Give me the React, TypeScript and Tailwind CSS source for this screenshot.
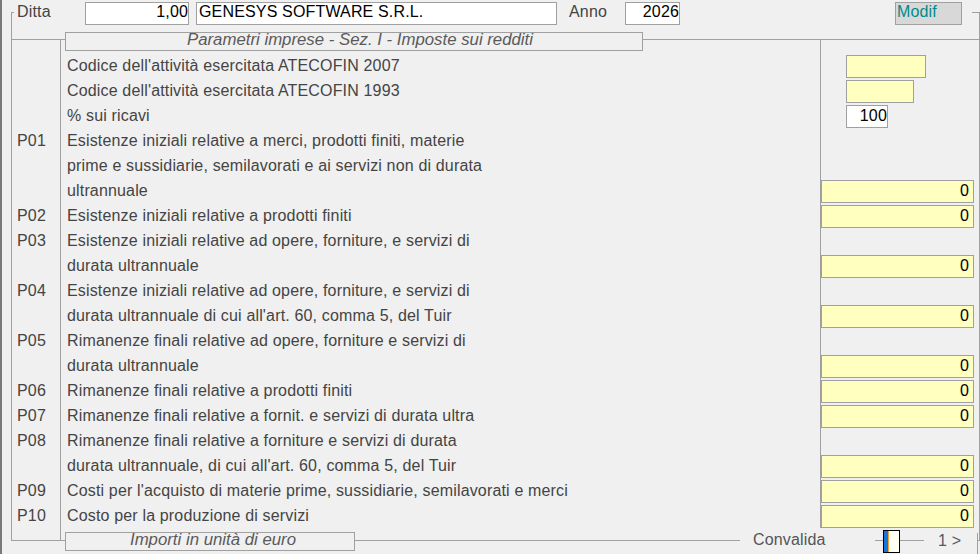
import React from 'react';

interface Row {
  code?: string;
  text: string;
  box?: 'ateco07' | 'ateco93' | 'pct' | 'val';
}

const rows: Row[] = [
  { text: "Codice dell'attività esercitata ATECOFIN 2007", box: 'ateco07' },
  { text: "Codice dell'attività esercitata ATECOFIN 1993", box: 'ateco93' },
  { text: '% sui ricavi', box: 'pct' },
  { code: 'P01', text: 'Esistenze iniziali relative a merci, prodotti finiti, materie' },
  { text: 'prime e sussidiarie, semilavorati e ai servizi non di durata' },
  { text: 'ultrannuale', box: 'val' },
  { code: 'P02', text: 'Esistenze iniziali relative a prodotti finiti', box: 'val' },
  { code: 'P03', text: 'Esistenze iniziali relative ad opere, forniture, e servizi di' },
  { text: 'durata ultrannuale', box: 'val' },
  { code: 'P04', text: 'Esistenze iniziali relative ad opere, forniture, e servizi di' },
  { text: "durata ultrannuale di cui all'art. 60, comma 5, del Tuir", box: 'val' },
  { code: 'P05', text: 'Rimanenze finali relative ad opere, forniture e servizi di' },
  { text: 'durata ultrannuale', box: 'val' },
  { code: 'P06', text: 'Rimanenze finali relative a prodotti finiti', box: 'val' },
  { code: 'P07', text: 'Rimanenze finali relative a fornit. e servizi di durata ultra', box: 'val' },
  { code: 'P08', text: 'Rimanenze finali relative a forniture e servizi di durata' },
  { text: "durata ultrannuale, di cui all'art. 60, comma 5, del Tuir", box: 'val' },
  { code: 'P09', text: "Costi per l'acquisto di materie prime, sussidiarie, semilavorati e merci", box: 'val' },
  { code: 'P10', text: 'Costo per la produzione di servizi', box: 'val' },
];

const ValueBox: React.FC<{ kind?: Row['box'] }> = ({ kind }) => {
  if (kind === 'ateco07') {
    return <div className="ml-[25px] w-[80px] h-[23px] border border-[#a0a0a0] bg-[#ffffc0]" />;
  }
  if (kind === 'ateco93') {
    return <div className="ml-[25px] w-[68px] h-[23px] border border-[#a0a0a0] bg-[#ffffc0]" />;
  }
  if (kind === 'pct') {
    return (
      <div className="ml-[25px] w-[42px] h-[23px] border border-[#a0a0a0] bg-white text-right leading-[20px] text-black">
        100
      </div>
    );
  }
  if (kind === 'val') {
    return (
      <div className="w-[153px] h-[23px] border border-[#a0a0a0] bg-[#ffffc0] text-right pr-[4px] leading-[20px] text-black">
        0
      </div>
    );
  }
  return null;
};

const App: React.FC = () => {
  return (
    <div className="w-[980px] h-[554px] bg-[#f0f0f0] flex overflow-hidden text-[16px] tracking-[0.16px] text-[#444444] font-['Liberation_Sans',Arial,sans-serif]">
      {/* window edge */}
      <div className="w-[2px] h-full bg-[#7a7a7a] shrink-0" />

      <div className="flex-1">
        {/* group frame */}
        <div className="relative ml-[9px] mt-[12px] w-[969px] h-[529px] border border-[#a0a0a0] flex flex-col">
          {/* header row sitting on the top border */}
          <div className="absolute -top-[11px] left-[2px] w-[958px] h-[23px] bg-[#f0f0f0] flex items-start">
            <span className="w-[71px] pl-[3px] pt-[1px] leading-[18px]">Ditta</span>
            <div className="w-[104px] h-[23px] border border-[#a0a0a0] bg-white text-right leading-[18px] text-black">
              1,00
            </div>
            <div className="ml-[7px] w-[361px] h-[23px] border border-[#a0a0a0] bg-white pl-[2px] leading-[18px] text-black">
              GENESYS SOFTWARE S.R.L.
            </div>
            <span className="ml-[12px] w-[56px] pt-[1px] leading-[18px]">Anno</span>
            <div className="w-[55px] h-[23px] border border-[#a0a0a0] bg-white text-right leading-[18px] text-black">
              2026
            </div>
            <div className="ml-[215px] w-[67px] h-[23px] border border-[#a0a0a0] bg-[#d8d8d8] pl-[1px] leading-[18px] text-[#008b8b]">
              Modif
            </div>
          </div>

          {/* body */}
          <div className="mt-[26px] flex-1 flex border-t border-[#a0a0a0]">
            <div className="w-[49px] border-r border-[#a0a0a0] pt-[13px]">
              {rows.map((r, i) => (
                <div key={i} className="h-[25px] pl-[5px] leading-[25px]">
                  {r.code}
                </div>
              ))}
            </div>
            <div className="w-[759px] pt-[13px]">
              {rows.map((r, i) => (
                <div key={i} className="h-[25px] pl-[6px] leading-[25px] whitespace-nowrap">
                  {r.text}
                </div>
              ))}
            </div>
            <div className="w-[159px] h-[488px] border-l border-[#a0a0a0] pt-[14px]">
              {rows.map((r, i) => (
                <div key={i} className="h-[25px] pt-[1px]">
                  <ValueBox kind={r.box} />
                </div>
              ))}
            </div>
          </div>

          {/* section caption on the inner line */}
          <div className="absolute left-[53px] top-[19px] w-[578px] h-[19px] border border-[#a0a0a0] bg-[#f0f0f0] text-center pl-[12px] italic text-[16.8px] tracking-normal leading-[14px] text-[#5a5a5a]">
            Parametri imprese - Sez. I - Imposte sui redditi
          </div>

          {/* footer caption on the bottom border */}
          <div className="absolute left-[53px] top-[519px] w-[290px] h-[19px] border border-[#a0a0a0] bg-[#f0f0f0] text-center pl-[6px] italic text-[16.8px] tracking-normal leading-[14px] text-[#5a5a5a]">
            Importi in unità di euro
          </div>

          {/* convalida strip */}
          <div className="absolute left-[728px] top-[517px] w-[238px] h-[23px] bg-[#f0f0f0] flex items-start">
            <span className="w-[135px] pl-[13px] leading-[20px] text-[#555555]">Convalida</span>
            <div className="mt-[10px] w-[8px] h-px bg-[#a0a0a0]" />
            <div className="w-[17px] h-[23px] border border-black bg-white flex">
              <div className="w-[4px] h-full bg-[#1a73d9]" />
              <div className="w-[1px] h-full bg-[#f0a030]" />
              <div className="flex-1 bg-[#fffff4]" />
            </div>
            <div className="mt-[10px] w-[24px] h-px bg-[#a0a0a0]" />
            <span className="ml-[14px] leading-[21px] text-[#555566]">1 &gt;</span>
            <div className="ml-auto mt-[3px] w-px h-[21px] bg-[#a0a0a0]" />
          </div>
        </div>
      </div>
    </div>
  );
};

export default App;
